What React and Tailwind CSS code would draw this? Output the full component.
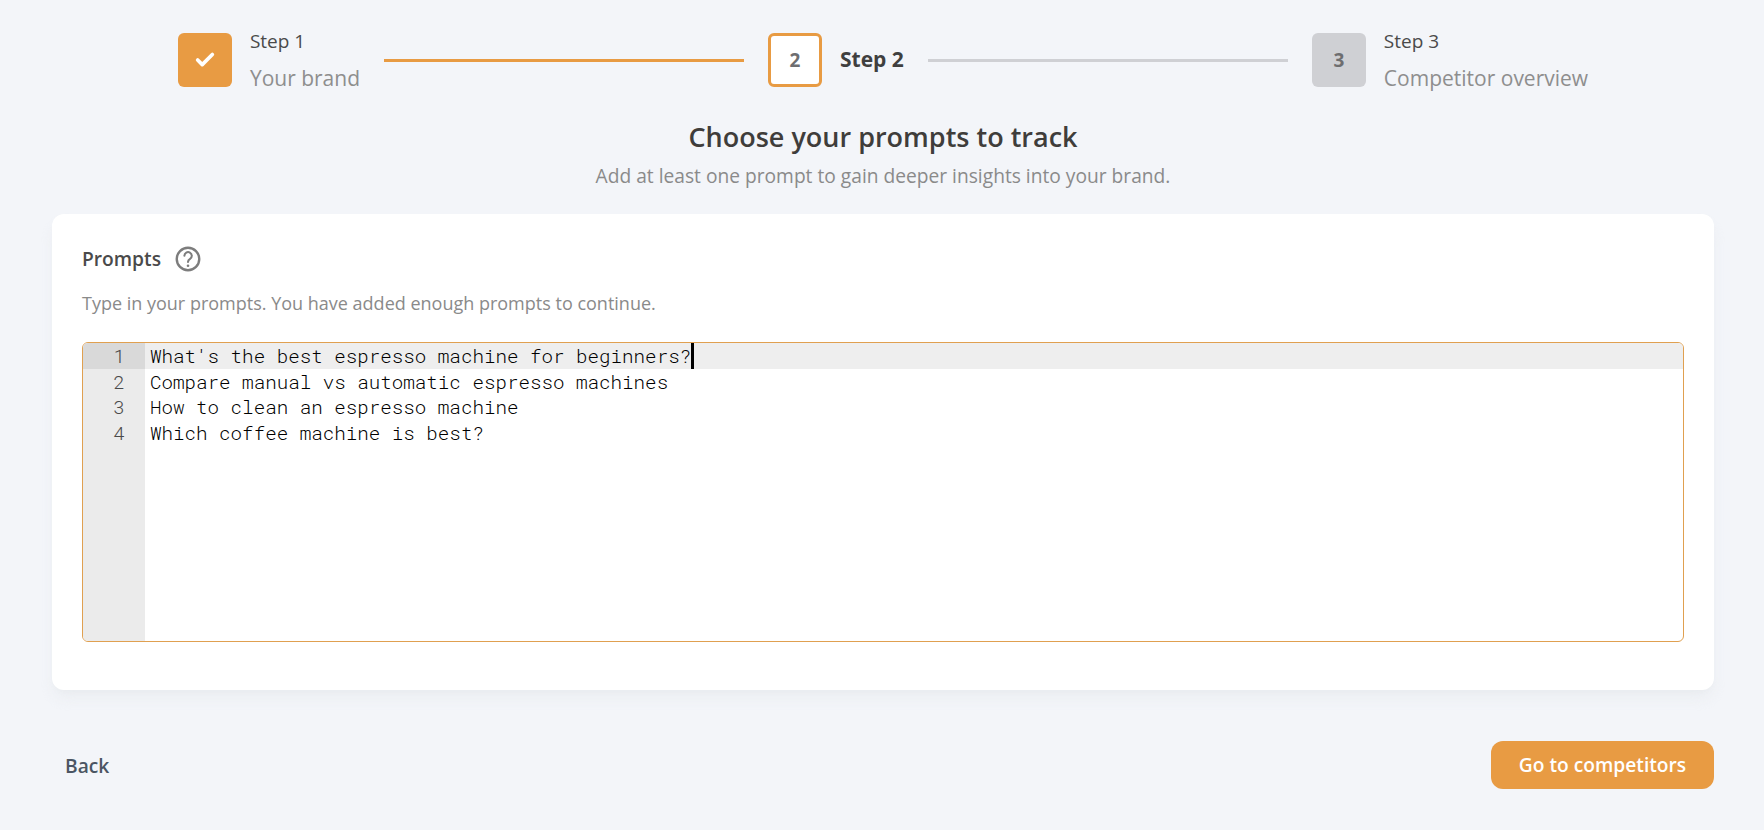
import { Check } from 'lucide-react'

const PROMPTS = [
  "What's the best espresso machine for beginners?",
  'Compare manual vs automatic espresso machines',
  'How to clean an espresso machine',
  'Which coffee machine is best?',
]

const StepLabel = ({ step, text }) => (
  <div className="h-[54px] flex flex-col justify-between ml-[18px]">
    <p className="text-[19px] leading-[16px] text-[#4a4a4a]">{step}</p>
    <p className="text-[21px] leading-[18px] text-[#8e8e8e] whitespace-nowrap">{text}</p>
  </div>
)

const HelpIcon = () => (
  <svg width="26" height="26" viewBox="0 0 24 24" fill="none" stroke="#7d7d7d" strokeLinecap="round" className="ml-[14px]">
    <circle cx="12" cy="12" r="10.4" strokeWidth="2.2" />
    <path d="M8.7 9a3.4 3.4 0 1 1 5.2 2.9c-1.3.8-1.9 1.5-1.9 2.9" strokeWidth="1.9" />
    <path d="M12 18.2h.01" strokeWidth="2.4" />
  </svg>
)

const App = () => {
  return (
    <div className="min-h-screen bg-[#f3f5f9] pt-[33px] pl-[52px] pr-[50px] font-['Open_Sans',sans-serif]">
      {/* Stepper */}
      <div className="flex items-center justify-center gap-6">
        <div className="flex items-center">
          <div className="w-[54px] h-[54px] rounded-md bg-[#e89b43] flex items-center justify-center">
            <Check size={22} strokeWidth={4} className="text-white" />
          </div>
          <StepLabel step="Step 1" text="Your brand" />
        </div>
        <div className="w-[360px] h-[3px] bg-[#e89b43]" />
        <div className="flex items-center">
          <div className="w-[54px] h-[54px] rounded-md bg-white border-[3px] border-[#e89b43] flex items-center justify-center text-[19px] font-bold text-[#6e6e70]">
            2
          </div>
          <p className="ml-[18px] text-[21px] font-bold text-[#3f3f3f]">Step 2</p>
        </div>
        <div className="w-[360px] h-[3px] bg-[#cfd0d4]" />
        <div className="flex items-center">
          <div className="w-[54px] h-[54px] rounded-md bg-[#cfd0d4] flex items-center justify-center text-[19px] font-bold text-[#6e6e70]">
            3
          </div>
          <StepLabel step="Step 3" text="Competitor overview" />
        </div>
      </div>

      {/* Title */}
      <div className="text-center mt-[33px]">
        <h1 className="text-[27px] leading-[34px] font-semibold text-[#3f3d3b]">Choose your prompts to track</h1>
        <p className="mt-[10px] text-[19.2px] leading-[24px] text-[#8a8a8a]">
          Add at least one prompt to gain deeper insights into your brand.
        </p>
      </div>

      {/* Card */}
      <div className="mt-[26px] h-[476px] bg-white rounded-xl shadow-lg shadow-gray-200/60 pt-[30px] px-[30px]">
        <div className="flex items-center h-[30px]">
          <span className="text-[19.2px] font-semibold text-[#4a4a4a]">Prompts</span>
          <HelpIcon />
        </div>
        <p className="mt-[17px] text-[18px] leading-[24px] text-[#8a8a8a]">
          Type in your prompts. You have added enough prompts to continue.
        </p>

        {/* Editor */}
        <div className="mt-[27px] h-[300px] border border-[#e0a050] rounded-md overflow-hidden flex font-['Roboto_Mono','DejaVu_Sans_Mono',monospace] font-light text-[19.2px] leading-[25.3px]">
          <div className="w-[62px] bg-[#ebebeb] text-[#4a4a4a] text-right">
            {PROMPTS.map((_, i) => (
              <div key={i} className={`pr-[20px] ${i === 0 ? 'bg-[#d9d9d9] h-[26px]' : ''}`}>
                {i + 1}
              </div>
            ))}
          </div>
          <div className="flex-1 text-black">
            {PROMPTS.map((line, i) => (
              <div key={line} className={`pl-[5px] flex items-center ${i === 0 ? 'bg-[#eeeeee] h-[26px]' : ''}`}>
                <span className="whitespace-pre">{line}</span>
                {i === 0 && <span className="w-[3px] h-[26px] bg-black" />}
              </div>
            ))}
          </div>
        </div>
      </div>

      {/* Footer */}
      <div className="mt-[51px] flex items-center justify-between">
        <button className="ml-[13px] pt-[2px] text-[19.2px] font-semibold text-[#4b5563]">Back</button>
        <button className="h-[48px] w-[223px] rounded-xl bg-[#e89b43] text-white text-[19.2px] font-semibold">
          Go to competitors
        </button>
      </div>
    </div>
  )
}

export default App
